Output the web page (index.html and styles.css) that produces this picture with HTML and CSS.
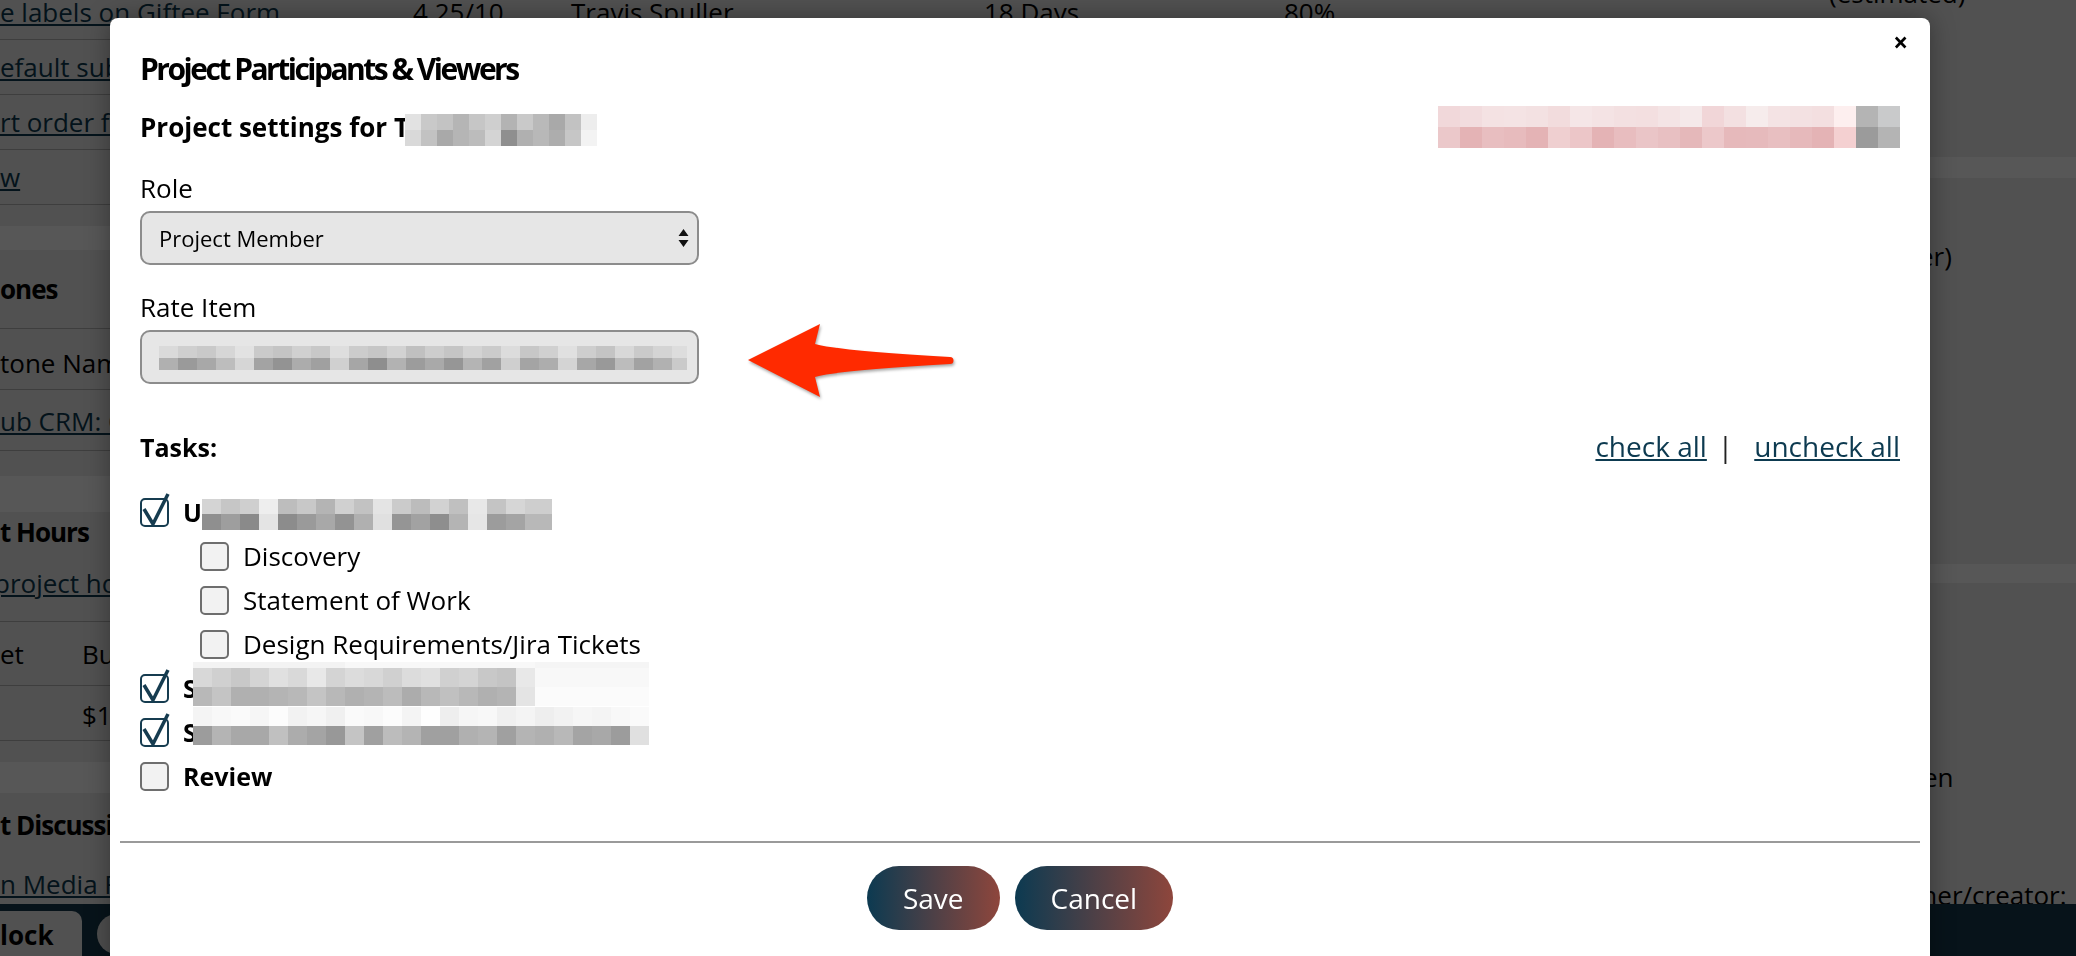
FILE: index.html
```html
<!DOCTYPE html>
<html lang="en">
<head>
    <meta charset="UTF-8">
    <meta name="viewport" content="width=device-width, initial-scale=1.0">
    <title>Project Participants &amp; Viewers</title>
    <link rel="stylesheet" href="styles.css">
</head>
<body>

<div class="page">
    <div class="main">
        <div class="task-row">
            <a href="#">e labels on Giftee Form</a>
            <span>4.25/10</span>
            <span>Travis Spuller</span>
            <span>18 Days</span>
            <span>80%</span>
        </div>
        <div class="task-row"><a href="#">efault subscription</a></div>
        <div class="task-row"><a href="#">rt order for tasks</a></div>
        <div class="task-row"><a href="#">w</a></div>

        <div class="gap"></div>
        <div class="band"></div>
        <section>
            <div class="milestones-head"><h3 class="block-title">ones</h3></div>
            <div class="block-row row-a">tone Name</div>
            <div class="block-row row-b"><a href="#">ub CRM: Contacts</a></div>
        </section>

        <div class="gap wide"></div>
        <div class="band tall"></div>
        <section>
            <div class="hours-head">
                <h3 class="block-title">t Hours</h3>
                <a href="#" class="hours-link">project hours</a>
            </div>
            <div class="block-row budget-row row-c"><span>et</span><span>Budget used</span></div>
            <div class="block-row budget-row row-d"><span></span><span>$1,250.00</span></div>
        </section>

        <div class="gap"></div>
        <div class="band mid"></div>
        <section class="discussion">
            <h3 class="block-title">t Discussion</h3>
            <a href="#" class="discussion-link">n Media Review</a>
        </section>
    </div>

    <aside class="side">
        <p class="side-text">(estimated)</p>
        <div class="side-band first"></div>
        <p class="side-text manager">(Manager)</p>
        <div class="side-band second"></div>
        <p class="side-text hidden-flag">Forbidden</p>
        <p class="side-text owner">Owner/creator:</p>
    </aside>
</div>

<div class="footer-bar">
    <span class="bar-btn">lock</span>
    <span class="bar-pill"></span>
</div>

<div class="overlay"></div>

<div class="modal">
    <span class="modal-close">&times;</span>
    <h1 class="modal-title">Project Participants &amp; Viewers</h1>

    <div class="settings-row">
        <h2 class="settings-title">Project settings for T<span class="mosaic mosaic-name"></span></h2>
        <span class="mosaic mosaic-logo"></span>
    </div>

    <div class="field">
        <label class="field-label">Role</label>
        <div class="select">
            <span>Project Member</span>
            <svg class="select-arrows" width="11" height="20" viewBox="0 0 11 20"><path d="M0.5 8 L5.5 1 L10.5 8 Z M0.5 12 L5.5 19 L10.5 12 Z"/></svg>
        </div>
    </div>

    <div class="field">
        <label class="field-label">Rate Item</label>
        <div class="select">
            <span class="mosaic mosaic-rate"></span>
        </div>
    </div>

    <div class="tasks-head">
        <strong>Tasks:</strong>
        <div class="bulk"><a href="#">check all</a><span class="sep">|</span><a href="#">uncheck all</a></div>
    </div>

    <ul class="task-list">
        <li class="task">
            <span class="box checked"><svg class="tick" width="32" height="36" viewBox="0 0 32 36"><path d="M4 17 L13 32 L28 2"/></svg></span>
            <span class="task-name">U<span class="mosaic mosaic-u"></span></span>
        </li>
        <li class="task sub"><span class="box"></span><span>Discovery</span></li>
        <li class="task sub"><span class="box"></span><span>Statement of Work</span></li>
        <li class="task sub"><span class="box"></span><span>Design Requirements/Jira Tickets</span></li>
        <li class="task">
            <span class="box checked"><svg class="tick" width="32" height="36" viewBox="0 0 32 36"><path d="M4 17 L13 32 L28 2"/></svg></span>
            <span class="task-name">S<span class="mosaic mosaic-s1"></span></span>
        </li>
        <li class="task">
            <span class="box checked"><svg class="tick" width="32" height="36" viewBox="0 0 32 36"><path d="M4 17 L13 32 L28 2"/></svg></span>
            <span class="task-name">S<span class="mosaic mosaic-s2"></span></span>
        </li>
        <li class="task"><span class="box"></span><span class="task-name">Review</span></li>
    </ul>

    <div class="modal-footer">
        <button class="btn">Save</button>
        <button class="btn">Cancel</button>
    </div>

    <!-- annotation arrow pointing at the rate item -->
    <svg class="pointer" width="215" height="82" viewBox="0 0 215 82">
        <path d="M3 40 L75 4 L70 24 Q95 31 205 37 A3.5 3.5 0 0 1 205 44 Q95 50 70 57 L75 77 Z"/>
    </svg>
</div>

</body>
</html>
```

FILE: styles.css
```css
body{
    margin:0;
    height:956px;
    overflow:hidden;
    position:relative;
    font-family:"Open Sans", "Liberation Sans", sans-serif;
    font-size:26px;
    line-height:36px;
    color:#000;
    background-color:#ececec;
}
a{
    color:#0d3a50;
    text-decoration:underline;
}

/* page behind the dialog */
.page{
    display:flex;
    margin-top:-15px;
}
.main{
    width:1800px;
    flex:none;
}
.task-row{
    display:grid;
    grid-template-columns:413px 158px 413px 300px 1fr;
    align-items:center;
    height:54px;
    border-bottom:1px solid #b6b6b6;
    white-space:nowrap;
}
.gap{
    height:21px;
}
.gap.wide{
    height:25px;
}
.band{
    height:24px;
    background-color:#fff;
}
.band.tall{
    height:36px;
}
.band.mid{
    height:31px;
}
.block-title{
    margin:0;
    font-size:26px;
    line-height:40px;
    font-weight:700;
    letter-spacing:-1px;
}
.milestones-head{
    padding:19px 0;
    border-bottom:1px solid #b6b6b6;
}
.block-row{
    border-bottom:1px solid #b6b6b6;
    white-space:nowrap;
}
.row-a{
    padding:16px 0 8px;
}
.row-b{
    padding:13px 0 11px;
}
.hours-head{
    padding-bottom:20px;
    border-bottom:1px solid #b6b6b6;
}
.hours-link{
    display:block;
    margin-top:13px;
    margin-left:-6px;
}
.budget-row{
    display:grid;
    grid-template-columns:82px 1fr;
}
.row-c{
    padding:14px 0 13px;
}
.row-d{
    padding:11px 0 7px;
}
.discussion .block-title{
    margin-top:12px;
}
.discussion-link{
    display:block;
    margin-top:21px;
}
.side{
    flex:1;
    margin-top:-10px;
    white-space:nowrap;
    overflow:hidden;
}
.side-text{
    margin:0;
    padding-left:29px;
}
.side-band{
    background-color:#fff;
}
.side-band.first{
    height:21px;
    margin-top:146px;
}
.side-text.manager{
    margin-top:60px;
}
.side-band.second{
    height:19px;
    margin-top:290px;
}
.side-text.hidden-flag{
    margin-top:176px;
}
.side-text.owner{
    margin-top:82px;
    padding-left:81px;
}
.footer-bar{
    position:fixed;
    left:0;
    right:0;
    bottom:0;
    height:52px;
    display:flex;
    align-items:flex-end;
    background-color:#15384c;
}
.bar-btn{
    width:82px;
    height:45px;
    line-height:48px;
    font-size:26px;
    font-weight:700;
    background-color:#ececec;
    border-top-right-radius:10px;
}
.bar-pill{
    width:180px;
    height:40px;
    margin:0 0 2px 15px;
    border-radius:20px;
    background-color:#e4e4e4;
}
.overlay{
    position:fixed;
    top:0;
    left:0;
    right:0;
    bottom:0;
    background-color:rgba(0, 0, 0, 0.66);
}

/* dialog */
.modal{
    position:absolute;
    top:18px;
    left:110px;
    width:1820px;
    height:980px;
    box-sizing:border-box;
    padding:31px 30px 0;
    background-color:#fff;
    border-radius:8px;
    box-shadow:0 0 24px rgba(0, 0, 0, 0.35);
}
.modal-close{
    position:absolute;
    top:10px;
    right:22px;
    font-size:26px;
    line-height:28px;
    font-weight:700;
    cursor:pointer;
}
.modal-title{
    margin:0;
    font-size:30px;
    line-height:40px;
    font-weight:700;
    letter-spacing:-2.5px;
}
.settings-row{
    display:flex;
    justify-content:space-between;
    align-items:center;
    height:42px;
    margin-top:17px;
}
.settings-title{
    display:flex;
    align-items:center;
    margin:0;
    font-size:26px;
    line-height:36px;
    font-weight:700;
}
.mosaic{
    display:block;
    flex:none;
}
.mosaic-name{
    width:192px;
    height:32px;
    margin:6px 0 0 -4px;
    background:
        linear-gradient(90deg,#e2e2e2 0 16px,#c9c9c9 16px 32px,#c3c3c3 32px 48px,#b5b5b5 48px 64px,#c6c6c6 64px 80px,#cfcfcf 80px 96px,#b3b3b3 96px 112px,#c9c9c9 112px 128px,#b9b9b9 128px 144px,#a9a9a9 144px 160px,#c2c2c2 160px 176px,#ededed 176px) 0 0/100% 16px no-repeat,
        linear-gradient(90deg,#d9d9d9 0 16px,#c2c2c2 16px 32px,#a9a9a9 32px 48px,#b5b5b5 48px 64px,#bcbcbc 64px 80px,#d4d4d4 80px 96px,#8f8f8f 96px 112px,#b0b0b0 112px 128px,#b8b8b8 128px 144px,#adadad 144px 160px,#c6c6c6 160px 176px,#f3f3f3 176px) 0 16px/100% 16px no-repeat;
}
.mosaic-logo{
    width:462px;
    height:42px;
    background:
        linear-gradient(90deg,#f1d8da 0 22px,#f2dcde 22px 44px,#f4e2e3 44px 66px,#f4e3e4 66px 88px,#f3e1e2 88px 110px,#f2dcdd 110px 132px,#f5e6e7 132px 154px,#f4e3e4 154px 176px,#f3e0e1 176px 198px,#f3dfe0 198px 220px,#f4e4e5 220px 242px,#f5e9ea 242px 264px,#f1d6d8 264px 286px,#f3e0e1 286px 308px,#f6ecec 308px 330px,#f4e3e4 330px 352px,#f3e1e2 352px 374px,#f3dfe0 374px 396px,#fdefef 396px 418px,#b4b4b4 418px 440px,#c9cacb 440px) 0 0/100% 21px no-repeat,
        linear-gradient(90deg,#ebc8ca 0 22px,#e4b3b5 22px 44px,#e8bec0 44px 66px,#e7bbbd 66px 88px,#e4b3b5 88px 110px,#efcfd0 110px 132px,#ecc6c8 132px 154px,#e4b3b5 154px 176px,#e8bdbf 176px 198px,#eac5c7 198px 220px,#e8c0c2 220px 242px,#e5b8ba 242px 264px,#ecc8ca 264px 286px,#e6b9bb 286px 308px,#e6babc 308px 330px,#e8bfc1 330px 352px,#e6b9bb 352px 374px,#e4b3b5 374px 396px,#f4d0d1 396px 418px,#9b9b9b 418px 440px,#b4b4b4 440px) 0 21px/100% 21px no-repeat;
}
.field{
    margin-top:22px;
}
.field + .field{
    margin-top:24px;
}
.field-label{
    display:block;
    margin-bottom:5px;
}
.select{
    display:flex;
    align-items:center;
    justify-content:space-between;
    width:559px;
    height:54px;
    box-sizing:border-box;
    padding:0 8px 0 17px;
    border:2px solid #8c8c8c;
    border-radius:10px;
    background-color:#e6e6e6;
    font-size:22px;
}
.select-arrows{
    fill:#111;
}
.mosaic-rate{
    width:528px;
    height:24px;
    margin-top:2px;
    background:
        linear-gradient(90deg,#dadada 0 19px,#cfcfcf 19px 38px,#c9c9c9 38px 57px,#d6d6d6 57px 76px,#e2e2e2 76px 95px,#cacaca 95px 114px,#c4c4c4 114px 133px,#d0d0d0 133px 152px,#c8c8c8 152px 171px,#dedede 171px 190px,#cccccc 190px 209px,#c6c6c6 209px 228px,#d2d2d2 228px 247px,#c0c0c0 247px 266px,#cdcdcd 266px 285px,#c5c5c5 285px 304px,#d3d3d3 304px 323px,#cbcbcb 323px 342px,#dcdcdc 342px 361px,#c7c7c7 361px 380px,#d0d0d0 380px 399px,#e0e0e0 399px 418px,#cecece 418px 437px,#c4c4c4 437px 456px,#d8d8d8 456px 475px,#cacaca 475px 494px,#d4d4d4 494px 513px,#dddddd 513px) 0 0/100% 12px no-repeat,
        linear-gradient(90deg,#b0b0b0 0 19px,#9a9a9a 19px 38px,#a8a8a8 38px 57px,#bdbdbd 57px 76px,#d6d6d6 76px 95px,#a3a3a3 95px 114px,#939393 114px 133px,#acacac 133px 152px,#a0a0a0 152px 171px,#d0d0d0 171px 190px,#a6a6a6 190px 209px,#8e8e8e 209px 228px,#b2b2b2 228px 247px,#9c9c9c 247px 266px,#a9a9a9 266px 285px,#969696 285px 304px,#b4b4b4 304px 323px,#a1a1a1 323px 342px,#cfcfcf 342px 361px,#a4a4a4 361px 380px,#adadad 380px 399px,#d4d4d4 399px 418px,#a7a7a7 418px 437px,#999999 437px 456px,#bcbcbc 456px 475px,#a2a2a2 475px 494px,#b1b1b1 494px 513px,#cacaca 513px) 0 12px/100% 12px no-repeat;
}
.tasks-head{
    display:flex;
    justify-content:space-between;
    align-items:baseline;
    margin-top:44px;
}
.tasks-head strong{
    font-size:25px;
}
.bulk{
    font-size:28px;
}
.sep{
    margin:0 21px 0 11px;
    color:#222;
}
.task-list{
    list-style:none;
    margin:25px 0 0;
    padding:0;
}
.task{
    display:flex;
    align-items:center;
    gap:14px;
    height:44px;
    white-space:nowrap;
}
.task.sub{
    padding-left:60px;
}
.task-name{
    display:flex;
    align-items:center;
    font-size:25px;
    font-weight:700;
}
.box{
    position:relative;
    flex:none;
    width:29px;
    height:29px;
    box-sizing:border-box;
    border:2px solid #6e6e6e;
    border-radius:5px;
    background-color:#f2f2f2;
}
.box.checked{
    border-color:#163c50;
    background-color:#fff;
}
.tick{
    position:absolute;
    left:-2px;
    top:-8px;
    fill:none;
    stroke:#163c50;
    stroke-width:3.5;
    stroke-linejoin:round;
}
.mosaic-u{
    width:350px;
    height:31px;
    margin-top:5px;
    background:
        linear-gradient(90deg,#d4d4d4 0 19px,#c6c6c6 19px 38px,#cfcfcf 38px 57px,#eeeeee 57px 76px,#bdbdbd 76px 95px,#c8c8c8 95px 114px,#b4b4b4 114px 133px,#d0d0d0 133px 152px,#c2c2c2 152px 171px,#e4e4e4 171px 190px,#cbcbcb 190px 209px,#bcbcbc 209px 228px,#d2d2d2 228px 247px,#c0c0c0 247px 266px,#e8e8e8 266px 285px,#c4c4c4 285px 304px,#d6d6d6 304px 323px,#cecece 323px) 0 0/100% 15px no-repeat,
        linear-gradient(90deg,#8f8f8f 0 19px,#9e9e9e 19px 38px,#8a8a8a 38px 57px,#e4e4e4 57px 76px,#8c8c8c 76px 95px,#9a9a9a 95px 114px,#a8a8a8 114px 133px,#939393 133px 152px,#b0b0b0 152px 171px,#e0e0e0 171px 190px,#959595 190px 209px,#a2a2a2 209px 228px,#8e8e8e 228px 247px,#b4b4b4 247px 266px,#e6e6e6 266px 285px,#9c9c9c 285px 304px,#a4a4a4 304px 323px,#b8b8b8 323px) 0 15px/100% 16px no-repeat;
}
.mosaic-s1{
    width:456px;
    height:44px;
    margin:0 0 8px -4px;
    background:
        linear-gradient(90deg,#f3f3f3 0 152px,#f8f8f8 152px 342px,#f5f5f5 342px) 0 0/100% 6px no-repeat,
        linear-gradient(90deg,#d8d8d8 0 19px,#d0d0d0 19px 38px,#c8c8c8 38px 57px,#d4d4d4 57px 76px,#e0e0e0 76px 95px,#d9d9d9 95px 114px,#e8e8e8 114px 133px,#d4d4d4 133px 152px,#dcdcdc 152px 171px,#d8d8d8 171px 190px,#d0d0d0 190px 209px,#dcdcdc 209px 228px,#e0e0e0 228px 247px,#d0d0d0 247px 266px,#d4d4d4 266px 285px,#c8c8c8 285px 304px,#c4c4c4 304px 323px,#e8e8e8 323px 342px,#f8f8f8 342px) 0 6px/100% 19px no-repeat,
        linear-gradient(90deg,#b8b8b8 0 19px,#c4c4c4 19px 38px,#b0b0b0 38px 57px,#b0b0b0 57px 76px,#b4b4b4 76px 95px,#b8b8b8 95px 114px,#c4c4c4 114px 133px,#b8b8b8 133px 152px,#b0b0b0 152px 171px,#b4b4b4 171px 190px,#bcbcbc 190px 209px,#acacac 209px 228px,#b8b8b8 228px 247px,#c0c0c0 247px 266px,#b8b8b8 266px 285px,#b0b0b0 285px 304px,#b4b4b4 304px 323px,#e4e4e4 323px 342px,#fbfbfb 342px) 0 25px/100% 19px no-repeat;
}
.mosaic-s2{
    width:456px;
    height:38px;
    margin:0 0 12px -4px;
    background:
        linear-gradient(90deg,#f4f4f4 0 19px,#f8f8f8 19px 38px,#fafafa 38px 57px,#f6f6f6 57px 76px,#fcfcfc 76px 95px,#f2f2f2 95px 114px,#f6f6f6 114px 133px,#f0f0f0 133px 152px,#fafafa 152px 171px,#f8f8f8 171px 190px,#fcfcfc 190px 209px,#f4f4f4 209px 228px,#fefefe 228px 247px,#eeeeee 247px 266px,#f6f6f6 266px 285px,#f8f8f8 285px 304px,#f0f0f0 304px 323px,#f4f4f4 323px 342px,#eeeeee 342px 361px,#f2f2f2 361px 380px,#f6f6f6 380px 399px,#f4f4f4 399px 418px,#f8f8f8 418px 437px,#fafafa 437px) 0 0/100% 19px no-repeat,
        linear-gradient(90deg,#9c9c9c 0 19px,#b4b4b4 19px 38px,#a8a8a8 38px 57px,#a8a8a8 57px 76px,#c0c0c0 76px 95px,#acacac 95px 114px,#a4a4a4 114px 133px,#989898 133px 152px,#c4c4c4 152px 171px,#a0a0a0 171px 190px,#bcbcbc 190px 209px,#b4b4b4 209px 228px,#a0a0a0 228px 247px,#a0a0a0 247px 266px,#b0b0b0 266px 285px,#b4b4b4 285px 304px,#a0a0a0 304px 323px,#b4b4b4 323px 342px,#b0b0b0 342px 361px,#b8b8b8 361px 380px,#a4a4a4 380px 399px,#a8a8a8 399px 418px,#9c9c9c 418px 437px,#e0e0e0 437px) 0 19px/100% 19px no-repeat;
}
.modal-footer{
    display:flex;
    justify-content:center;
    gap:15px;
    margin:43px -20px 0;
    padding-top:23px;
    border-top:2px solid #9a9a9a;
}
.btn{
    height:64px;
    padding:0 36px;
    border:none;
    border-radius:32px;
    background:linear-gradient(90deg, #0c3a51, #8e463c);
    color:white;
    font-family:"Open Sans", "Liberation Sans", sans-serif;
    font-size:28px;
    cursor:pointer;
}
.pointer{
    position:absolute;
    left:635px;
    top:302px;
    fill:#ff2a00;
    filter:drop-shadow(1px 2px 1.5px rgba(0, 0, 0, 0.35));
}
```
